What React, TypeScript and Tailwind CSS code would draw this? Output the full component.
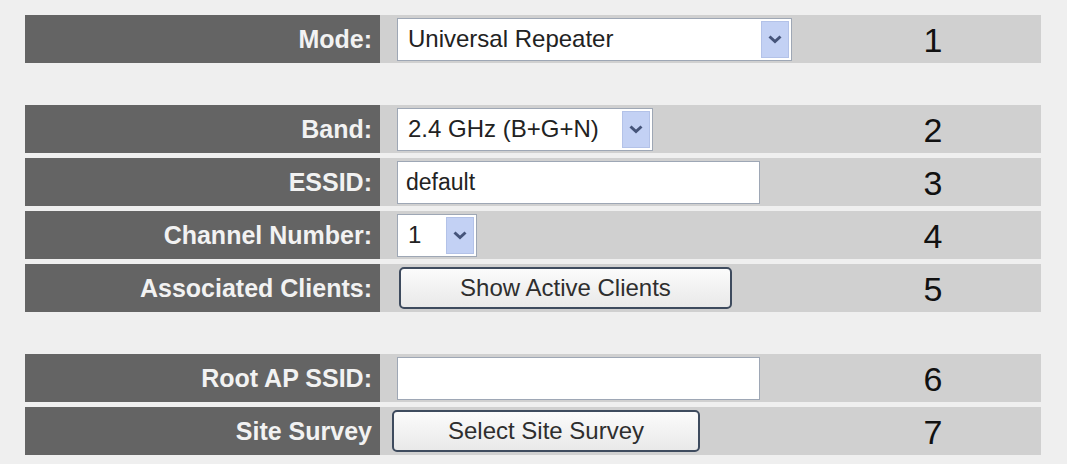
import React from 'react';

type Row = {
  label: string;
  num: number;
  control: React.ReactNode;
};

function Chevron() {
  return (
    <svg width="16" height="10" viewBox="0 0 16 10">
      <path d="M2.5 2.5 L8 7.5 L13.5 2.5" fill="none" stroke="#45547a" strokeWidth="3" />
    </svg>
  );
}

function Select({ value, width }: { value: string; width: string }) {
  return (
    <div
      className={`${width} h-[43px] bg-white border border-[#9ea7b5] flex items-center justify-between pl-[10px] pr-[2px]`}
    >
      <span className="text-[24px] text-[#222] leading-none whitespace-nowrap">{value}</span>
      <div className="w-[28px] h-[37px] bg-[#c3d1f4] border border-[#b3c2e8] flex items-center justify-center">
        <Chevron />
      </div>
    </div>
  );
}

function TextBox({ value }: { value?: string }) {
  return (
    <div className="w-[363px] h-[43px] bg-white border border-[#9ea7b5] flex items-center pl-[8px]">
      <span className="text-[23px] text-[#222] leading-none">{value}</span>
    </div>
  );
}

function Button({ text, width }: { text: string; width: string }) {
  return (
    <div
      className={`${width} h-[42px] rounded-[5px] border-2 border-[#3e4b5e] bg-gradient-to-b from-[#fbfbfb] to-[#e9e9e9] flex items-center justify-center`}
    >
      <span className="text-[24px] text-[#2e2e2e] leading-none">{text}</span>
    </div>
  );
}

function FormRow({ label, num, control }: Row) {
  return (
    <div className="flex h-[48px]">
      <div className="w-[355px] bg-[#646464] flex items-center justify-end pr-[8px]">
        <span className="text-[25px] font-bold text-[#f2f2f2] leading-none whitespace-nowrap">{label}</span>
      </div>
      <div className="w-[445px] bg-[#d0d0d0] flex items-center pl-[17px]">{control}</div>
      <div className="w-[216px] bg-[#d0d0d0] flex items-center justify-center pt-[2px]">
        <span className="text-[34px] text-[#111] leading-none">{num}</span>
      </div>
    </div>
  );
}

export default function App() {
  const groups: Row[][] = [
    [{ label: 'Mode:', num: 1, control: <Select value="Universal Repeater" width="w-[395px]" /> }],
    [
      { label: 'Band:', num: 2, control: <Select value="2.4 GHz (B+G+N)" width="w-[256px]" /> },
      { label: 'ESSID:', num: 3, control: <TextBox value="default" /> },
      { label: 'Channel Number:', num: 4, control: <Select value="1" width="w-[80px]" /> },
      {
        label: 'Associated Clients:',
        num: 5,
        control: <div className="pl-[2px]"><Button text="Show Active Clients" width="w-[333px]" /></div>,
      },
    ],
    [
      { label: 'Root AP SSID:', num: 6, control: <TextBox /> },
      {
        label: 'Site Survey',
        num: 7,
        control: <div className="-ml-[5px]"><Button text="Select Site Survey" width="w-[308px]" /></div>,
      },
    ],
  ];

  return (
    <div
      className="w-[1067px] h-[464px] bg-[#efefef] pl-[25px] pt-[15px] flex flex-col gap-[42px]"
      style={{ fontFamily: '"Liberation Sans", Arial, sans-serif' }}
    >
      {groups.map((g, i) => (
        <div key={i} className="flex flex-col gap-[5px]">
          {g.map((r) => (
            <FormRow key={r.num} {...r} />
          ))}
        </div>
      ))}
    </div>
  );
}
